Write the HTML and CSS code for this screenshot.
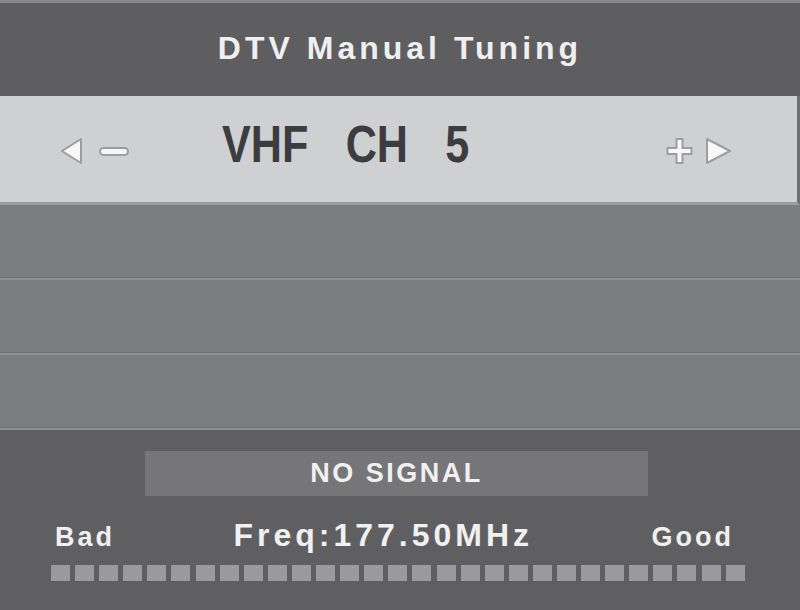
FILE: index.html
```html
<!DOCTYPE html>
<html lang="en">
<head>
  <meta charset="UTF-8" />
  <meta name="viewport" content="width=device-width, initial-scale=1.0" />
  <title>DTV Manual Tuning</title>
  <link rel="stylesheet" href="styles.css">
</head>
<body>
  <div class="osd">
    <header class="title">DTV Manual Tuning</header>

    <div class="tuner">
      <svg class="keys" width="72" height="30" viewBox="0 0 72 30">
        <polygon points="4,15 23,3 23,27" class="key" stroke-linejoin="round" />
        <rect x="42" y="12" width="28" height="7" rx="3.5" class="key" />
      </svg>
      <span class="channel">
        <span>VHF</span>
        <span>CH</span>
        <span>5</span>
      </span>
      <svg class="keys right" width="72" height="30" viewBox="0 0 72 30">
        <path d="M13.5 3 h6 v9 h9 v6 h-9 v9 h-6 v-9 h-9 v-6 h9 z" class="key" stroke-linejoin="round" />
        <polygon points="44,3 67,15 44,27" class="key" stroke-linejoin="round" />
      </svg>
    </div>

    <div class="row"></div>
    <div class="row"></div>
    <div class="row"></div>

    <div class="status">
      <div class="signal">NO SIGNAL</div>
      <div class="labels">
        <span class="small">Bad</span>
        <span class="freq">Freq:177.50MHz</span>
        <span class="small">Good</span>
      </div>
      <div class="meter" id="meter"></div>
    </div>
  </div>

  <script>
    const meter = document.getElementById('meter');
    for (let i = 0; i < 29; i++) {
      const cell = document.createElement('span');
      cell.className = 'cell';
      meter.appendChild(cell);
    }
  </script>
</body>
</html>
```

FILE: styles.css
```css
html, body {
  margin: 0;
  padding: 0;
}
body {
  font-family: "Liberation Sans", Arial, sans-serif;
  font-weight: bold;
  background: #5f5f61;
  width: 800px;
  height: 610px;
  overflow: hidden;
}
.osd {
  width: 800px;
  height: 610px;
  display: flex;
  flex-direction: column;
}
.title {
  box-sizing: border-box;
  height: 96px;
  border-top: 3px solid #88888a;
  background: #5e5e60;
  color: #efefef;
  font-size: 32px;
  letter-spacing: 4px;
  text-align: center;
  line-height: 90px;
}
.tuner {
  box-sizing: border-box;
  height: 109px;
  background: #cfd0d2;
  border-bottom: 3px solid #9b9c9e;
  border-right: 3px solid #707073;
  display: flex;
  align-items: center;
  padding: 0 62px 0 58px;
}
.keys {
  flex: none;
  margin-top: 3px;
}
.key {
  fill: #f7f7f7;
  stroke: #9d9da0;
  stroke-width: 2;
}
.channel {
  display: inline-flex;
  gap: 45px;
  margin-left: 92px;
  font-size: 52px;
  color: #3d3d40;
  transform: scaleX(0.83);
  transform-origin: left center;
  margin-top: -10px;
}
.right {
  margin-left: auto;
}
.row {
  flex: none;
  height: 75px;
  box-sizing: border-box;
  background: #7b7c80;
  border-bottom: 2px solid #8f9093;
  box-shadow: inset 0 -1px 0 #6d6e71;
}
.status {
  flex: 1;
  padding-top: 21px;
  color: #f0f0f0;
}
.signal {
  margin-left: 145px;
  width: 503px;
  height: 45px;
  background: #767679;
  text-align: center;
  line-height: 45px;
  font-size: 27px;
  letter-spacing: 2.5px;
}
.labels {
  display: flex;
  justify-content: space-between;
  align-items: baseline;
  margin-top: 23px;
  padding: 0 66px 0 55px;
  height: 36px;
  line-height: 32px;
}
.small {
  font-size: 27px;
  letter-spacing: 3px;
}
.freq {
  font-size: 32px;
  letter-spacing: 4px;
}
.meter {
  display: flex;
  gap: 5.1px;
  margin: 10px 0 0 51px;
}
.cell {
  width: 19px;
  height: 16px;
  background: #9a9a9d;
}
```
